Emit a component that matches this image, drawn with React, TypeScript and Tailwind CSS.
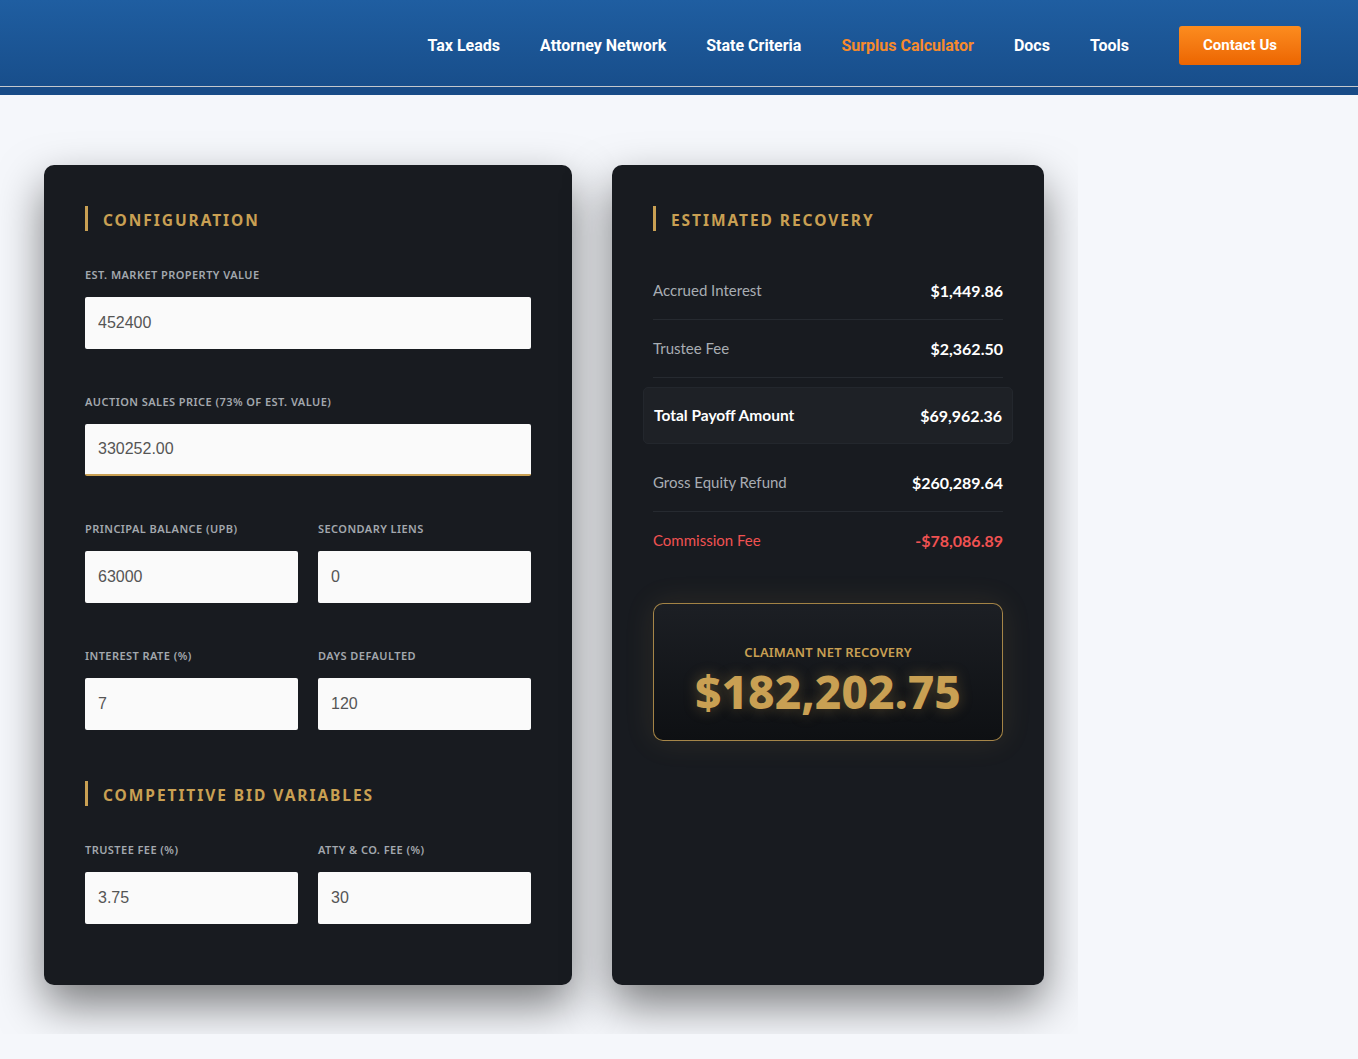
import React from "react";

const navLinks = [
  { label: "Tax Leads", active: false },
  { label: "Attorney Network", active: false },
  { label: "State Criteria", active: false },
  { label: "Surplus Calculator", active: true },
  { label: "Docs", active: false },
  { label: "Tools", active: false },
];

const cardFont = { fontFamily: '"Noto Sans", "Open Sans", sans-serif' };

const SectionTitle: React.FC<{ children: React.ReactNode }> = ({ children }) => (
  <div className="flex h-[25px] items-center border-l-[3px] border-[#c9a053] pl-[15px]">
    <h2 className="pt-[4px] text-[15.5px] font-bold uppercase leading-none tracking-[0.125em] text-[#c9a053]">
      {children}
    </h2>
  </div>
);

interface FieldProps {
  label: string;
  value: string;
  focused?: boolean;
}

const Field: React.FC<FieldProps> = ({ label, value, focused }) => (
  <div className="flex flex-col">
    <label className="mb-[14px] text-[11px] font-semibold uppercase leading-[16px] tracking-[0.04em] text-[#a3a8ae]">
      {label}
    </label>
    <input
      readOnly
      value={value}
      className={`h-[52px] w-full rounded-[2px] bg-[#fafafa] px-[13px] text-[16px] text-[#555] outline-none font-['Liberation_Sans',Arial,sans-serif] ${
        focused ? "border-b-2 border-[#c9a053]" : ""
      }`}
    />
  </div>
);

interface RowProps {
  label: string;
  value: string;
  danger?: boolean;
  border?: boolean;
}

const ResultRow: React.FC<RowProps> = ({ label, value, danger, border = true }) => (
  <div
    className={`flex items-center justify-between py-[17px] font-['Lato',sans-serif] leading-[23px] ${
      border ? "border-b border-[#262a30]" : ""
    }`}
  >
    <span className={`text-[15px] ${danger ? "text-[#f05252]" : "text-[#a8adb3]"}`}>{label}</span>
    <span className={`text-[16px] font-bold ${danger ? "text-[#f05252]" : "text-white"}`}>{value}</span>
  </div>
);

export default function App() {
  return (
    <div className="min-h-[1059px] bg-[#f5f7fb]">
      {/* header */}
      <header className="bg-[#184b87]">
        <div className="flex h-[86px] items-center justify-end bg-gradient-to-b from-[#1f5ea1] to-[#184e8b] pr-[57px] pt-[5px] font-['Roboto',sans-serif]">
          <nav className="flex items-center gap-[40px]">
            {navLinks.map((l) => (
              <a
                key={l.label}
                href="#"
                className={`text-[16px] font-bold ${l.active ? "text-[#f78a2c]" : "text-white"}`}
              >
                {l.label}
              </a>
            ))}
          </nav>
          <button className="ml-[50px] h-[39px] w-[122px] rounded-[3px] bg-gradient-to-b from-[#fc8c1e] to-[#ec6500] text-[15px] font-bold text-white">
            Contact Us
          </button>
        </div>
        <div className="h-px bg-[#c4c8cd]" />
        <div className="h-[8px]" />
      </header>

      {/* content */}
      <div className="w-[1078px] overflow-hidden pb-[49px] pl-[44px] pt-[70px]" style={cardFont}>
        <div className="flex items-start gap-[40px]">
          {/* configuration card */}
          <section className="h-[820px] w-[528px] rounded-[10px] bg-[#181b20] px-[41px] pt-[41px] shadow-[0_20px_45px_rgba(0,0,0,0.5)]">
            <SectionTitle>Configuration</SectionTitle>
            <div className="mt-[36px] flex flex-col gap-[45px]">
              <Field label="Est. Market Property Value" value="452400" />
              <Field label="Auction Sales Price (73% of Est. Value)" value="330252.00" focused />
              <div className="grid grid-cols-2 gap-[20px]">
                <Field label="Principal Balance (UPB)" value="63000" />
                <Field label="Secondary Liens" value="0" />
              </div>
              <div className="grid grid-cols-2 gap-[20px]">
                <Field label="Interest Rate (%)" value="7" />
                <Field label="Days Defaulted" value="120" />
              </div>
            </div>
            <div className="mt-[51px]">
              <SectionTitle>Competitive Bid Variables</SectionTitle>
            </div>
            <div className="mt-[36px] grid grid-cols-2 gap-[20px]">
              <Field label="Trustee Fee (%)" value="3.75" />
              <Field label="Atty & Co. Fee (%)" value="30" />
            </div>
          </section>

          {/* results card */}
          <section className="h-[820px] w-[432px] rounded-[10px] bg-[#181b20] px-[41px] pt-[41px] shadow-[0_20px_45px_rgba(0,0,0,0.5)]">
            <SectionTitle>Estimated Recovery</SectionTitle>
            <div className="mt-[31px]">
              <ResultRow label="Accrued Interest" value="$1,449.86" />
              <ResultRow label="Trustee Fee" value="$2,362.50" />
              <div className="-mx-[10px] mb-[10px] mt-[9px] flex items-center justify-between rounded-[5px] border border-[#23272d] bg-[#1e2126] px-[10px] py-[16px] font-['Lato',sans-serif] leading-[23px]">
                <span className="text-[15.5px] font-bold text-white">Total Payoff Amount</span>
                <span className="text-[16px] font-bold text-white">$69,962.36</span>
              </div>
              <ResultRow label="Gross Equity Refund" value="$260,289.64" />
              <ResultRow label="Commission Fee" value="-$78,086.89" danger border={false} />
            </div>
            <div className="mt-[34px] flex h-[138px] flex-col items-center rounded-[10px] border border-[#c9a053]/80 bg-gradient-to-b from-[#1c1f24] to-[#0e1013] pt-[40px] shadow-[0_0_30px_rgba(201,160,83,0.12)]">
              <div className="text-[13px] font-semibold uppercase leading-[16px] tracking-[0.01em] text-[#c9a053]">
                Claimant Net Recovery
              </div>
              <div className="mt-[4px] text-[46px] font-extrabold leading-[54px] text-[#c9a053] [text-shadow:0_0_14px_rgba(201,160,83,0.35)]">
                $182,202.75
              </div>
            </div>
          </section>
        </div>
      </div>
    </div>
  );
}
